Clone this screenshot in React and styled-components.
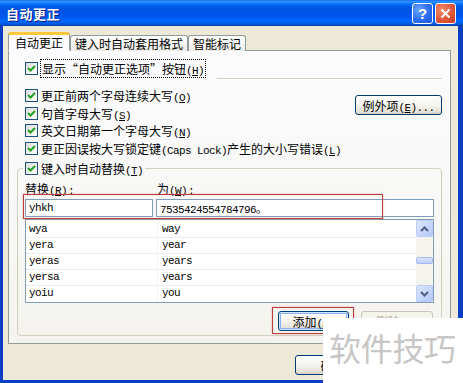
import React from 'react';
import styled, { createGlobalStyle } from 'styled-components';

const GlobalStyle = createGlobalStyle`
  html, body { margin: 0; padding: 0; background: #ffffff; }
  body {
    font-family: "Noto Sans CJK SC", "Liberation Sans", sans-serif;
    font-size: 12px;
    color: #000;
  }
`;

const Window = styled.div`
  position: relative;
  width: 463px;
  height: 383px;
  display: flex;
  flex-direction: column;
  background: #0a3fc4;
  overflow: hidden;
`;

const TitleBar = styled.div`
  flex: none;
  height: 26px;
  display: flex;
  align-items: center;
  padding: 0 7px 0 6px;
  background: linear-gradient(
    #0058ee 0%, #3593ff 4%, #288eff 8%, #127dff 12%, #036ffc 16%,
    #0262ee 22%, #0057e5 30%, #0054e3 40%, #0055eb 60%, #005bf5 70%,
    #026afe 80%, #0062ef 88%, #0052d6 94%, #0040ab 100%
  );
`;

const Title = styled.div`
  color: #fff;
  font-size: 13px;
  font-weight: bold;
  letter-spacing: 0.5px;
  text-shadow: 1px 1px 0 #0a1883;
`;

const CaptionButtons = styled.div`
  margin-left: auto;
  display: flex;
  gap: 2px;
`;

const CaptionButton = styled.div`
  width: 21px;
  height: 21px;
  box-sizing: border-box;
  border: 1px solid #fff;
  border-radius: 3px;
  display: flex;
  align-items: center;
  justify-content: center;
  color: #fff;
  font: bold 15px "Liberation Sans", sans-serif;
  background: ${({ $kind }) =>
    $kind === 'close'
      ? 'radial-gradient(circle at 30% 30%, #f08a6c 0%, #e0583a 55%, #c23a1e 100%)'
      : 'radial-gradient(circle at 30% 30%, #6aa2ff 0%, #2b6ff0 55%, #1a55d6 100%)'};
`;

const Body = styled.div`
  flex: 1;
  margin: 0 5px 3px 3px;
  padding: 6px 7px 4px 5px;
  background: #ece9d8;
  display: flex;
  flex-direction: column;
`;

const TabRow = styled.div`
  display: flex;
  align-items: flex-end;
  height: 19px;
  margin-bottom: -1px;
  position: relative;
  z-index: 1;
`;

const Tab = styled.div`
  box-sizing: border-box;
  width: ${({ $w }) => $w}px;
  height: ${({ $active }) => ($active ? 19 : 16)}px;
  border: 1px solid #919b9c;
  border-bottom: ${({ $active }) => ($active ? '1px solid #fcfcfe' : 'none')};
  border-top: ${({ $active }) => ($active ? '3px solid #ffc83c' : '1px solid #919b9c')};
  border-radius: 3px 3px 0 0;
  background: ${({ $active }) => ($active ? '#fcfcfe' : 'linear-gradient(#ffffff, #ecebe6)')};
  display: flex;
  align-items: center;
  justify-content: center;
  padding-bottom: ${({ $active }) => ($active ? 1 : 0)}px;
  white-space: nowrap;
`;

const Panel = styled.div`
  box-sizing: border-box;
  width: 443px;
  height: 294px;
  border: 1px solid #919b9c;
  background: linear-gradient(#fcfcfe, #f4f3ee);
  padding: 9px 8px 0 8px;
  display: flex;
  flex-direction: column;
`;

const TopRow = styled.div`
  display: flex;
  align-items: flex-start;
  height: 27px;
`;

const Rule = styled.div`
  flex: 1;
  margin: 18px 0 0 12px;
  height: 1px;
  background: #d0d0bf;
  box-shadow: 0 1px 0 #ffffff;
`;

const CheckRow = styled.div`
  display: flex;
  align-items: center;
  gap: 3px;
  height: ${({ $h }) => $h || 17.5}px;
  padding-left: 8px;
  white-space: nowrap;
`;

const Focus = styled.span`
  outline: 1px dotted #000;
  outline-offset: 0;
  padding: 0 1px;
`;

const Lat = styled.span`
  font-family: "Liberation Mono", monospace;
  font-size: 11px;
  letter-spacing: -0.6px;
`;

const Box = styled.span`
  flex: none;
  width: 13px;
  height: 13px;
  box-sizing: border-box;
  border: 1px solid #1c5180;
  background: linear-gradient(135deg, #dcdcd7, #ffffff);
  display: inline-flex;
  align-items: center;
  justify-content: center;
`;

const Checkbox = () => (
  <Box>
    <svg width="9" height="9" viewBox="0 0 9 9">
      <path d="M1 4 L3.5 6.5 L8 2" fill="none" stroke="#21a121" strokeWidth="2" />
    </svg>
  </Box>
);

const Mn = ({ k }) => (
  <Lat>
    (<u>{k}</u>)
  </Lat>
);

const OptionsBlock = styled.div`
  display: flex;
  align-items: flex-start;
`;

const OptionsList = styled.div`
  flex: 1;
  display: flex;
  flex-direction: column;
`;

const Button = styled.button`
  box-sizing: border-box;
  width: ${({ $w }) => $w}px;
  height: 20px;
  margin-top: ${({ $mt }) => $mt || 0}px;
  padding: 0;
  border: 1px solid #003c74;
  border-radius: 3px;
  background: linear-gradient(#ffffff 0%, #f4f3ee 50%, #e6e3d8 85%, #d6d0c5 100%);
  font: 12px "Noto Sans CJK SC", sans-serif;
  color: #000;
  white-space: nowrap;
  box-shadow: ${({ $default }) =>
    $default ? 'inset 0 0 0 1px #cee7ff, inset 0 0 0 2px #8cb0f8' : 'none'};
  &:disabled {
    color: #aca899;
    border-color: #c9c7ba;
    background: #f5f4ea;
  }
`;

const Group = styled.fieldset`
  margin: 2px 0 0 0;
  padding: 0 7px 4px 7px;
  border: 1px solid #d0d0bf;
  border-radius: 4px;
  min-width: 0;
`;

const Legend = styled.legend`
  padding: 0 2px;
  margin-left: -2px;
  height: 18px;
  display: flex;
  align-items: center;
  gap: 3px;
  white-space: nowrap;
`;

const LabelRow = styled.div`
  margin-top: 3px;
  height: 16px;
  display: grid;
  grid-template-columns: 131px 1fr;
  align-items: center;
  span + span { padding-left: 1px; }
`;

const InputRow = styled.div`
  margin-top: 3px;
  display: grid;
  grid-template-columns: 128px 278px;
  gap: 3px;
`;

const Input = styled.div`
  box-sizing: border-box;
  height: 18px;
  border: 1px solid #7f9db9;
  background: #fff;
  padding-left: 3px;
  display: flex;
  align-items: center;
  font-family: "Liberation Mono", "Noto Sans CJK SC", monospace;
  font-size: 11px;
  letter-spacing: -0.6px;
`;

const List = styled.div`
  box-sizing: border-box;
  margin-top: 2px;
  height: 84px;
  border: 1px solid #7f9db9;
  background: #fff;
  display: flex;
`;

const Rows = styled.div`
  flex: 1;
  padding-top: 2px;
`;

const Row = styled.div`
  box-sizing: border-box;
  height: 16px;
  display: grid;
  grid-template-columns: 131px 1fr;
  border-bottom: ${({ $last }) => ($last ? 'none' : '1px solid #eeeeee')};
  font-family: "Liberation Mono", monospace;
  font-size: 11px;
  letter-spacing: -0.6px;
  line-height: 15px;
  span { padding-left: 3px; }
  span + span { padding-left: 4px; border-left: 1px solid #f3f3f3; }
`;

const ScrollBar = styled.div`
  width: 17px;
  display: flex;
  flex-direction: column;
  background: #f4f3ee;
`;

const ScrollBtn = styled.div`
  box-sizing: border-box;
  width: 17px;
  height: 17px;
  border: 1px solid #b9cdf7;
  border-radius: 2px;
  background: linear-gradient(135deg, #dde7fe 0%, #c4d4fb 60%, #b4c8f6 100%);
  display: flex;
  align-items: center;
  justify-content: center;
`;

const Thumb = styled.div`
  box-sizing: border-box;
  height: 7px;
  margin-top: 20px;
  border: 1px solid #a8bcec;
  border-radius: 2px;
  background: linear-gradient(#dbe5fd, #bccdf7);
`;

const ScrollSpacer = styled.div`
  flex: 1;
`;

const GroupButtons = styled.div`
  margin-top: 8px;
  padding-right: 1px;
  display: flex;
  justify-content: flex-end;
  gap: 12px;
`;

const DialogButtons = styled.div`
  margin-top: 11px;
  display: flex;
  justify-content: flex-end;
  gap: 6px;
`;

const Highlight = styled.div`
  position: absolute;
  left: ${({ $x }) => $x}px;
  top: ${({ $y }) => $y}px;
  width: ${({ $w }) => $w}px;
  height: ${({ $h }) => $h}px;
  box-sizing: border-box;
  border: 1px solid #b8403c;
  box-shadow: 0 0 2px rgba(230, 120, 120, 0.6), inset 0 0 1px rgba(230, 120, 120, 0.5);
  pointer-events: none;
`;

const Watermark = styled.div`
  position: absolute;
  left: 323px;
  top: 318px;
  width: 140px;
  height: 65px;
  box-sizing: border-box;
  background: #fff;
  padding: 13px 0 0 6px;
  color: #c6c6c6;
  font-size: 32px;
  line-height: 32px;
  letter-spacing: -0.3px;
  white-space: nowrap;
`;

const Arrow = ({ dir }) => (
  <svg width="9" height="6" viewBox="0 0 9 6">
    <path
      d={dir === 'up' ? 'M1 5 L4.5 1.5 L8 5' : 'M1 1 L4.5 4.5 L8 1'}
      fill="none"
      stroke="#4d6185"
      strokeWidth="2"
    />
  </svg>
);

const entries = [
  ['wya', 'way'],
  ['yera', 'year'],
  ['yeras', 'years'],
  ['yersa', 'years'],
  ['yoiu', 'you'],
];

export default function App() {
  return (
    <Window>
      <GlobalStyle />
      <TitleBar>
        <Title>自动更正</Title>
        <CaptionButtons>
          <CaptionButton $kind="help">?</CaptionButton>
          <CaptionButton $kind="close">
            <svg width="11" height="11" viewBox="0 0 11 11">
              <path d="M1.5 1.5 L9.5 9.5 M9.5 1.5 L1.5 9.5" stroke="#fff" strokeWidth="2" />
            </svg>
          </CaptionButton>
        </CaptionButtons>
      </TitleBar>

      <Body>
        <TabRow>
          <Tab $w={62} $active>自动更正</Tab>
          <Tab $w={118}>键入时自动套用格式</Tab>
          <Tab $w={58}>智能标记</Tab>
        </TabRow>

        <Panel>
          <TopRow>
            <CheckRow $h={16}>
              <Checkbox />
              <Focus>
                显示“自动更正选项”按钮<Mn k="H" />
              </Focus>
            </CheckRow>
            <Rule />
          </TopRow>

          <OptionsBlock>
            <OptionsList>
              <CheckRow>
                <Checkbox />
                <span>更正前两个字母连续大写<Mn k="O" /></span>
              </CheckRow>
              <CheckRow>
                <Checkbox />
                <span>句首字母大写<Mn k="S" /></span>
              </CheckRow>
              <CheckRow>
                <Checkbox />
                <span>英文日期第一个字母大写<Mn k="N" /></span>
              </CheckRow>
              <CheckRow>
                <Checkbox />
                <span>
                  更正因误按大写锁定键<Lat>(Caps Lock)</Lat>产生的大小写错误<Mn k="L" />
                </span>
              </CheckRow>
            </OptionsList>
            <Button $w={87} $mt={8}>
              例外项<Mn k="E" /><Lat>...</Lat>
            </Button>
          </OptionsBlock>

          <Group>
            <Legend>
              <Checkbox />
              <span>键入时自动替换<Mn k="T" /></span>
            </Legend>
            <LabelRow>
              <span>替换<Mn k="R" /><Lat>:</Lat></span>
              <span>为<Mn k="W" /><Lat>:</Lat></span>
            </LabelRow>
            <InputRow>
              <Input>yhkh</Input>
              <Input>7535424554784796。</Input>
            </InputRow>
            <List>
              <Rows>
                {entries.map(([from, to], i) => (
                  <Row key={from} $last={i === entries.length - 1}>
                    <span>{from}</span>
                    <span>{to}</span>
                  </Row>
                ))}
              </Rows>
              <ScrollBar>
                <ScrollBtn>
                  <Arrow dir="up" />
                </ScrollBtn>
                <Thumb />
                <ScrollSpacer />
                <ScrollBtn>
                  <Arrow dir="down" />
                </ScrollBtn>
              </ScrollBar>
            </List>
            <GroupButtons>
              <Button $w={71} $default>
                添加<Mn k="A" />
              </Button>
              <Button $w={72} disabled>
                删除<Mn k="D" />
              </Button>
            </GroupButtons>
          </Group>
        </Panel>

        <DialogButtons>
          <Button $w={75}>确定</Button>
          <Button $w={75}>取消</Button>
        </DialogButtons>
      </Body>

      <Highlight $x={23} $y={194} $w={360} $h={25} />
      <Highlight $x={272} $y={307} $w={82} $h={27} />
      <Watermark>软件技巧</Watermark>
    </Window>
  );
}
